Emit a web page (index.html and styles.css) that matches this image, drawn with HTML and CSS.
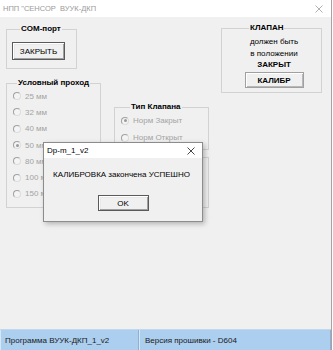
FILE: index.html
```html
<!DOCTYPE html>
<html lang="ru">
  <head>
    <meta charset="UTF-8" />
    <title>НПП "СЕНСОР ВУУК-ДКП</title>
    <link rel="stylesheet" href="styles.css">
  </head>
  <body>
    <div class="window">
      <div class="titlebar">
        <span class="title">НПП "СЕНСОР&nbsp; ВУУК-ДКП</span>
        <svg class="close" width="8" height="8" viewBox="0 0 8 8">
          <path d="M0.5 0.5 L7.5 7.5 M7.5 0.5 L0.5 7.5" stroke="#a8a8a8" stroke-width="0.9" />
        </svg>
      </div>

      <div class="form">
        <div class="col col-left">
          <fieldset class="box box-com">
            <legend>COM-порт</legend>
            <button class="btn btn-default btn-close">ЗАКРЫТЬ</button>
          </fieldset>

          <fieldset class="box box-dn">
            <legend>Условный проход</legend>
            <div class="radio"><span class="dot"></span>25 мм</div>
            <div class="radio"><span class="dot"></span>32 мм</div>
            <div class="radio"><span class="dot"></span>40 мм</div>
            <div class="radio"><span class="dot checked"></span>50 мм</div>
            <div class="radio"><span class="dot"></span>80 мм</div>
            <div class="radio"><span class="dot"></span>100 мм</div>
            <div class="radio"><span class="dot"></span>150 мм</div>
          </fieldset>
        </div>

        <div class="col col-mid">
          <fieldset class="box box-type">
            <legend>Тип Клапана</legend>
            <div class="radio"><span class="dot checked"></span>Норм Закрыт</div>
            <div class="radio"><span class="dot"></span>Норм Открыт</div>
          </fieldset>
          <fieldset class="box box-empty"></fieldset>
        </div>

        <div class="col col-right">
          <fieldset class="box box-valve">
            <legend>КЛАПАН</legend>
            <div class="valve-text">
              <p>должен быть</p>
              <p>в положении</p>
              <p class="strong">ЗАКРЫТ</p>
            </div>
            <button class="btn btn-calib">КАЛИБР</button>
          </fieldset>
        </div>
      </div>

      <div class="statusbar">
        <div class="panel panel-prog">Программа ВУУК-ДКП_1_v2</div>
        <div class="panel panel-fw">Версия прошивки - D604</div>
      </div>

      <div class="dialog">
        <div class="dialog-title">
          <span>Dp-m_1_v2</span>
          <svg class="close" width="8" height="8" viewBox="0 0 8 8">
            <path d="M0.5 0.5 L7.5 7.5 M7.5 0.5 L0.5 7.5" stroke="#333" stroke-width="0.9" />
          </svg>
        </div>
        <div class="dialog-body">
          <p class="message">КАЛИБРОВКА закончена УСПЕШНО</p>
          <button class="btn btn-default btn-ok">OK</button>
        </div>
      </div>
    </div>
  </body>
</html>
```
FILE: styles.css
```css
* {
  margin: 0;
  padding: 0;
  box-sizing: border-box;
  font-family: "Liberation Sans", Arial, sans-serif;
}

body {
  background: #fff;
  width: 333px;
  height: 350px;
  overflow: hidden;
  font-size: 8px;
  color: #000;
}

.window {
  position: relative;
  width: 332px;
  height: 350px;
  border-right: 1px solid #a4a4a4;
  display: flex;
  flex-direction: column;
}

.titlebar {
  height: 17px;
  background: #fff;
  display: flex;
  align-items: center;
  justify-content: space-between;
  padding: 0 8px 0 3px;
}

.title {
  font-size: 7.5px;
  color: #9a9a9a;
}

.form {
  flex: 1;
  background: #f0f0f0;
  display: flex;
  align-items: flex-start;
  padding-left: 6px;
}

.col {
  display: flex;
  flex-direction: column;
}

.col-left {
  width: 95px;
  margin-top: 7px;
}

.col-mid {
  width: 95px;
  margin-left: 13px;
  margin-top: 85px;
}

.col-right {
  width: 101px;
  margin-left: 12px;
  margin-top: 6px;
}

.box {
  border: 1px solid #d2d2d2;
  padding: 0;
  min-width: 0;
}

.box legend {
  font-weight: bold;
  font-size: 8px;
  line-height: 10px;
  padding: 0 1px;
}

/* COM-порт */
.box-com {
  width: 71px;
  padding: 8px 0 8px 5px;
}

.box-com legend {
  margin-left: 8px;
}

.btn {
  display: block;
  font-size: 8px;
  background: #f0f0f0;
  color: #000;
  border: 1px solid #a0a0a0;
  box-shadow: inset 1px 1px #fff, inset -1px -1px #b8b8b8;
}

.btn-default {
  border: 1px solid #5a5a5a;
  box-shadow: inset 1px 1px #fff, inset -1px -1px #a0a0a0, inset 2px 2px #e8e8e8;
}

.btn-close {
  width: 53px;
  height: 18px;
}

/* Условный проход */
.box-dn {
  margin-top: 9px;
  padding: 0 0 5px 6px;
}

.box-dn legend {
  margin-left: 4px;
}

.radio {
  height: 16.3px;
  display: flex;
  align-items: center;
  color: #a3a3a3;
  white-space: nowrap;
}

.dot {
  width: 8px;
  height: 8px;
  border-radius: 50%;
  border: 1px solid #a0a0a0;
  border-right-color: #dcdcdc;
  border-bottom-color: #dcdcdc;
  background: #f4f4f4;
  margin-right: 4px;
  display: flex;
  align-items: center;
  justify-content: center;
}

.dot.checked::after {
  content: "";
  width: 3px;
  height: 3px;
  border-radius: 50%;
  background: #9a9a9a;
}

/* Тип Клапана */
.box-type {
  padding: 0 0 3px 6px;
}

.box-type legend {
  margin-left: 9px;
}

.box-type .radio {
  height: 17px;
}

.box-empty {
  margin-top: 7px;
  height: 51px;
}

/* КЛАПАН */
.box-valve {
  padding: 3px 0 4px 5px;
  display: flex;
  flex-direction: column;
  align-items: center;
}

.box-valve legend {
  margin-left: 22px;
}

.valve-text {
  text-align: center;
  line-height: 11.5px;
}

.valve-text .strong {
  font-weight: bold;
}

.btn-calib {
  width: 59px;
  height: 16px;
  margin-top: 1.5px;
  font-weight: bold;
}

/* status bar */
.statusbar {
  height: 21px;
  background: #acceef;
  border-top: 1px solid #c4d7ea;
  display: flex;
  align-items: stretch;
}

.panel {
  display: flex;
  align-items: center;
  padding-left: 4px;
  border-left: 1px solid #d6e7f8;
  border-right: 1px solid #8fb0d2;
  color: #1a1a1a;
}

.panel-prog {
  width: 139px;
}

.panel-fw {
  flex: 1;
  padding-left: 5px;
}

/* message box */
.dialog {
  position: absolute;
  left: 43px;
  top: 142px;
  width: 160px;
  height: 80px;
  background: #f0f0f0;
  border: 1px solid #8c8c8c;
  box-shadow: 2px 2px 5px rgba(0, 0, 0, 0.25);
  display: flex;
  flex-direction: column;
}

.dialog-title {
  height: 15px;
  background: #fff;
  display: flex;
  align-items: center;
  justify-content: space-between;
  padding: 0 7px 0 3px;
  font-size: 8px;
}

.dialog-body {
  flex: 1;
  display: flex;
  flex-direction: column;
  align-items: center;
}

.message {
  align-self: flex-start;
  margin: 12px 0 0 9px;
  line-height: 10px;
  color: #000;
}

.btn-ok {
  width: 51px;
  height: 16px;
  margin-top: 15px;
}
```
